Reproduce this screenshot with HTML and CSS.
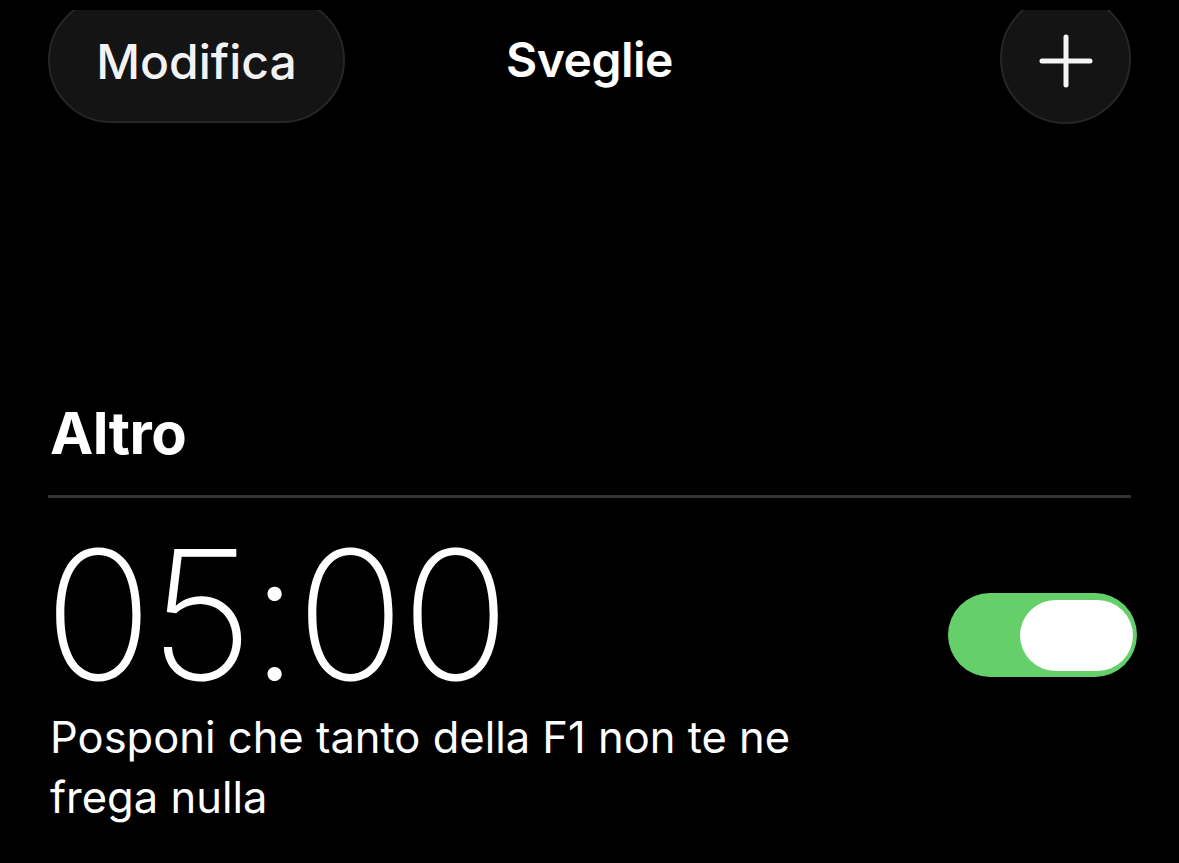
FILE: index.html
```html
<!DOCTYPE html>
<html lang="it">
<head>
    <meta charset="UTF-8">
    <meta name="viewport" content="width=device-width, initial-scale=1.0">
    <title>Sveglie</title>
    <link rel="stylesheet" href="styles.css">
</head>
<body>
    <div class="topbar">
        <button class="edit-btn">Modifica</button>
        <h1 class="title">Sveglie</h1>
        <button class="add-btn" aria-label="Aggiungi">
            <svg width="56" height="56" viewBox="0 0 56 56">
                <path d="M28 4 V52 M4 28 H52" stroke="#f5f5f5" stroke-width="5" stroke-linecap="round" fill="none"/>
            </svg>
        </button>
    </div>

    <div class="section">
        <h2 class="section-title">Altro</h2>
        <div class="alarm">
            <div class="alarm-row">
                <span class="alarm-time">05:00</span>
                <div class="toggle on"><div class="knob"></div></div>
            </div>
            <p class="alarm-label">Posponi che tanto della F1 non te ne<br>frega nulla</p>
        </div>
    </div>
</body>
</html>
```

FILE: styles.css
```css
body {
    margin: 0;
    background-color: #000;
    color: #fff;
    font-family: Inter, "Noto Sans", sans-serif;
}

.topbar {
    margin-top: 10px;
    height: 114px;
    overflow: hidden;
    padding: 0 48px;
    display: grid;
    grid-template-columns: 1fr auto 1fr;
    align-items: start;
}

.edit-btn {
    justify-self: start;
    margin-top: -13px;
    width: 297px;
    height: 126px;
    border-radius: 63px;
    background-color: #141414;
    border: 2px solid #262626;
    color: #f2f2f2;
    font-family: Inter, sans-serif;
    font-size: 48px;
    font-weight: 500;
    padding: 0;
    padding-top: 2px;
}

.title {
    margin: 0;
    margin-top: 20px;
    font-size: 48px;
    font-weight: 600;
    letter-spacing: -0.5px;
}

.add-btn {
    justify-self: end;
    margin-top: -17px;
    width: 131px;
    height: 131px;
    border-radius: 50%;
    background-color: #141414;
    border: 2px solid #262626;
    padding: 0;
    padding-top: 4px;
    display: flex;
    align-items: center;
    justify-content: center;
}

.section {
    padding: 0 48px;
}

.section-title {
    margin: 269px 0 0 2px;
    font-size: 58px;
    font-weight: 700;
    letter-spacing: -0.5px;
    line-height: 80px;
}

.alarm {
    border-top: 3px solid #333;
    margin-top: 22px;
}

.alarm-row {
    display: flex;
    align-items: center;
    justify-content: space-between;
    margin-top: 42px;
}

.alarm-time {
    font-size: 180px;
    font-weight: 200;
    letter-spacing: -3.5px;
    line-height: 150px;
    margin-left: -4px;
}

.toggle {
    width: 189px;
    height: 84px;
    border-radius: 42px;
    background-color: #65d06a;
    display: flex;
    align-items: center;
    justify-content: flex-end;
    padding: 0 4px;
    box-sizing: border-box;
    margin-right: -6px;
    margin-top: 40px;
}

.knob {
    width: 113px;
    height: 71px;
    border-radius: 36px;
    background-color: #fff;
}

.alarm-label {
    margin: 17px 0 0 2px;
    font-size: 43.5px;
    line-height: 60px;
    font-weight: 400;
}
```
